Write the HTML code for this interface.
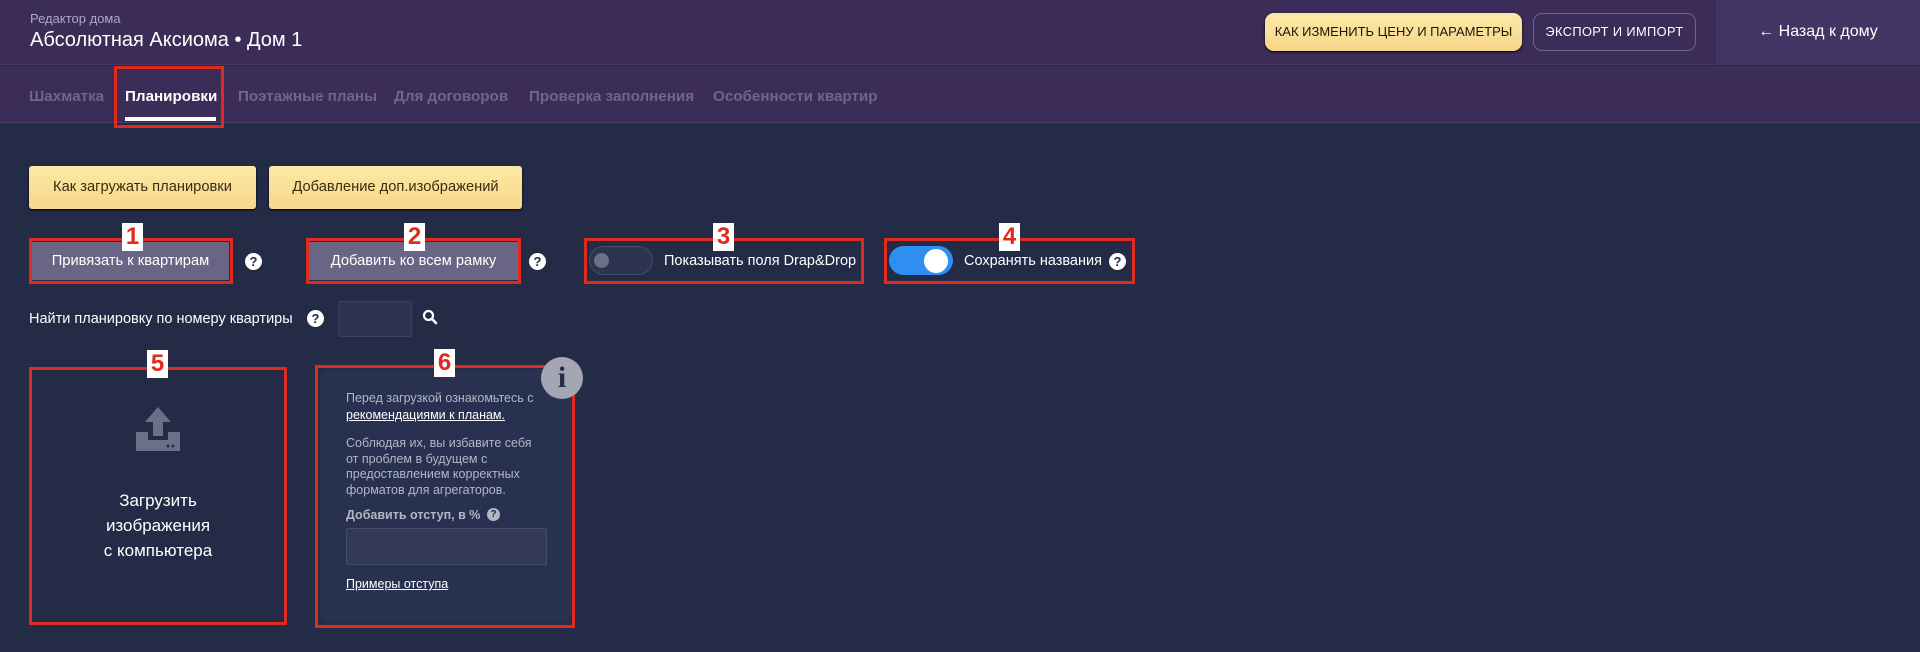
<!DOCTYPE html>
<html><head><meta charset="utf-8"><style>
*{box-sizing:border-box;margin:0;padding:0}
body{width:1920px;height:652px;overflow:hidden;background:#232b47;font-family:"Liberation Sans",sans-serif;position:relative;color:#fff}
.a{position:absolute}
.hdr{left:0;top:0;width:1920px;height:65px;background:#3b2d57;border-bottom:1px solid #463a62}
.tabs{left:0;top:66px;width:1920px;height:57px;background:#3b2d57;border-bottom:1px solid #4a4068}
.tab{position:absolute;top:22px;font-size:15.2px;font-weight:bold;color:#6f6590;white-space:nowrap}
.red{position:absolute;border:3px solid #e02a1c}
.num{position:absolute;background:#fff;color:#e02a1c;font-weight:bold;font-size:24px;width:21px;height:28px;text-align:center;line-height:28px}
.ybtn{position:absolute;background:linear-gradient(#fde9a6,#f7d78a);color:#3a2c10;border-radius:3px;font-size:14.7px;text-align:center;line-height:43px;box-shadow:0 1px 2px #000}
.pbtn{position:absolute;background:#6b6585;color:#fff;font-size:14.7px;text-align:center;line-height:38px}
.q{position:absolute;width:17px;height:17px;border-radius:50%;background:#fff;color:#232b47;font-size:13px;font-weight:bold;text-align:center;line-height:17px}
.t{position:absolute;font-size:14.5px;white-space:nowrap}
.s{position:absolute;font-size:12.5px;color:#b4b6c4;white-space:nowrap}
</style></head><body>
<div class="a hdr"></div>
<div class="a" style="left:1716px;top:0;width:204px;height:65px;background:#433563"></div>
<div class="a" style="left:30px;top:11px;font-size:13px;color:#b0a8c3">Редактор дома</div>
<div class="a" style="left:30px;top:29px;font-size:20px;color:#fff">Абсолютная Аксиома • Дом 1</div>
<div class="a" style="left:1265px;top:13px;width:257px;height:38px;border-radius:9px;background:linear-gradient(#fdeaa8,#f6d58a);color:#1d1608;font-size:13px;text-align:center;line-height:38px;box-shadow:0 1px 2px #000">КАК ИЗМЕНИТЬ ЦЕНУ И ПАРАМЕТРЫ</div>
<div class="a" style="left:1533px;top:13px;width:163px;height:38px;border-radius:9px;border:1px solid #6e6590;color:#fff;font-size:12.8px;text-align:center;line-height:36px;letter-spacing:.4px">ЭКСПОРТ И ИМПОРТ</div>
<div class="a" style="left:1716px;top:23px;width:204px;text-align:center;font-size:16px">← Назад к дому</div>
<div class="a tabs">
<div class="tab" style="left:29px">Шахматка</div>
<div class="tab" style="left:125px;color:#fff">Планировки</div>
<div class="tab" style="left:238px">Поэтажные планы</div>
<div class="tab" style="left:394px">Для договоров</div>
<div class="tab" style="left:529px">Проверка заполнения</div>
<div class="tab" style="left:713px">Особенности квартир</div>
<div class="a" style="left:125px;top:51px;width:91px;height:4px;background:#fff"></div>
</div>
<div class="red" style="left:114px;top:66px;width:110px;height:62px"></div>

<div class="ybtn" style="left:29px;top:166px;width:227px;height:43px">Как загружать планировки</div>
<div class="ybtn" style="left:269px;top:166px;width:253px;height:43px">Добавление доп.изображений</div>

<div class="pbtn" style="left:32px;top:242px;width:197px;height:38px">Привязать к квартирам</div>
<div class="red" style="left:29px;top:238px;width:204px;height:46px"></div>
<div class="q" style="left:245px;top:253px">?</div>
<div class="pbtn" style="left:309px;top:242px;width:209px;height:38px">Добавить ко всем рамку</div>
<div class="red" style="left:306px;top:238px;width:215px;height:46px"></div>
<div class="q" style="left:529px;top:253px">?</div>

<div class="red" style="left:584px;top:238px;width:280px;height:46px"></div>
<div class="a" style="left:589px;top:246px;width:64px;height:29px;border-radius:15px;background:#2c3450;border:1px solid #454d69"></div>
<div class="a" style="left:594px;top:253px;width:15px;height:15px;border-radius:50%;background:#6b6f88"></div>
<div class="t" style="left:664px;top:253px">Показывать поля Drap&amp;Drop</div>

<div class="red" style="left:884px;top:238px;width:251px;height:46px"></div>
<div class="a" style="left:889px;top:246px;width:64px;height:29px;border-radius:15px;background:#2f8ff0"></div>
<div class="a" style="left:924px;top:249px;width:24px;height:24px;border-radius:50%;background:#fff"></div>
<div class="t" style="left:964px;top:253px">Сохранять названия</div>
<div class="q" style="left:1109px;top:253px">?</div>

<div class="num" style="left:122px;top:223px">1</div>
<div class="num" style="left:404px;top:223px">2</div>
<div class="num" style="left:713px;top:223px">3</div>
<div class="num" style="left:999px;top:223px">4</div>

<div class="t" style="left:29px;top:311px">Найти планировку по номеру квартиры</div>
<div class="q" style="left:307px;top:310px">?</div>
<div class="a" style="left:338px;top:301px;width:74px;height:36px;background:#2c3451;border:1px solid #3a4260;border-radius:2px"></div>
<svg class="a" style="left:422px;top:309px" width="16" height="16" viewBox="0 0 16 16"><circle cx="6.5" cy="6.5" r="4.5" stroke="#fff" stroke-width="2.2" fill="none"/><path d="M10 10l4 4" stroke="#fff" stroke-width="2.6" stroke-linecap="round"/></svg>

<div class="red" style="left:29px;top:367px;width:258px;height:258px"></div>
<svg class="a" style="left:136px;top:407px" width="44" height="44" viewBox="0 0 44 44"><path d="M22 0L9 15h8v14h10V15h8z" fill="#6b6f88"/><path d="M0 25h12v8h20v-8h12v19H0z" fill="#6b6f88"/><circle cx="32" cy="39" r="1.5" fill="#232b47"/><circle cx="37" cy="39" r="1.5" fill="#232b47"/></svg>
<div class="a" style="left:29px;top:488px;width:258px;text-align:center;font-size:17px;line-height:25px">Загрузить<br>изображения<br>с компьютера</div>
<div class="num" style="left:147px;top:350px">5</div>

<div class="a" style="left:320px;top:369px;width:251px;height:254px;background:#283150;border-radius:6px"></div>
<div class="red" style="left:315px;top:365px;width:260px;height:263px"></div>
<div class="a" style="left:541px;top:357px;width:42px;height:42px;border-radius:50%;background:#a4a6b3;color:#232b47;font-family:'Liberation Serif',serif;font-weight:bold;font-size:30px;text-align:center;line-height:42px">i</div>
<div class="num" style="left:434px;top:349px">6</div>
<div class="s" style="left:346px;top:391px">Перед загрузкой ознакомьтесь с</div>
<div class="s" style="left:346px;top:408px;color:#fff;text-decoration:underline">рекомендациями к планам.</div>
<div class="s" style="left:346px;top:436px;line-height:15.5px">Соблюдая их, вы избавите себя<br>от проблем в будущем с<br>предоставлением корректных<br>форматов для агрегаторов.</div>
<div class="s" style="left:346px;top:508px;font-weight:bold">Добавить отступ, в %</div>
<div class="q" style="left:487px;top:508px;width:13px;height:13px;font-size:10px;line-height:13px;background:#b4b6c4">?</div>
<div class="a" style="left:346px;top:528px;width:201px;height:37px;background:#323a58;border:1px solid #454d6a;border-radius:2px"></div>
<div class="s" style="left:346px;top:577px;color:#fff;text-decoration:underline">Примеры отступа</div>
</body></html>
